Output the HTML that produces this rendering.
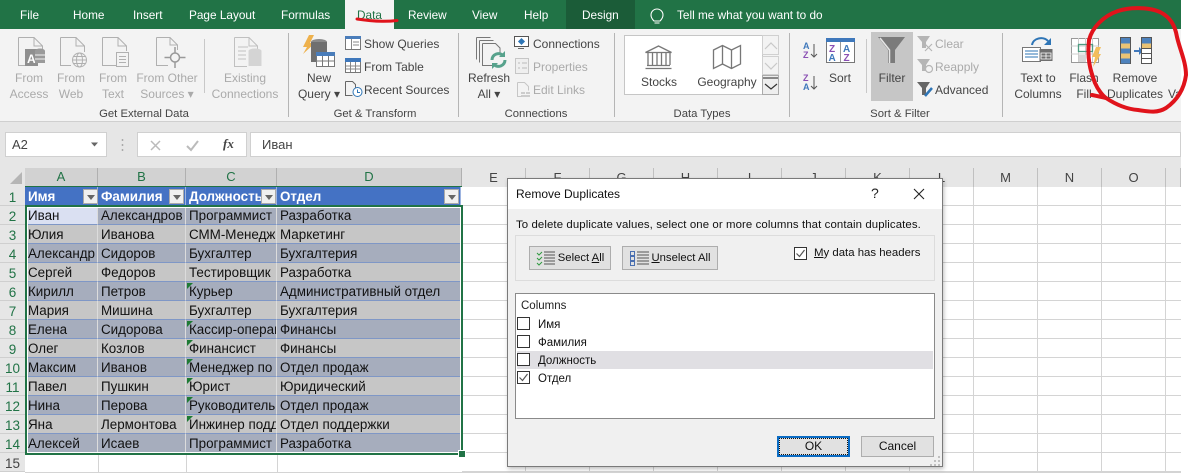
<!DOCTYPE html>
<html><head><meta charset="utf-8">
<style>
html,body{margin:0;padding:0;background:#fff}
body{width:1189px;height:473px;position:relative;overflow:hidden;font-family:"Liberation Sans",sans-serif;font-size:12px;color:#444}
.a,.t,.c{position:absolute;white-space:nowrap}
.t{line-height:16px;height:16px}
.c{line-height:16px;height:16px;text-align:center}
.g{font-size:11.300px}
.d{color:#aaa}
.tab{position:absolute;top:7px;color:#fff;font-size:11.800px;line-height:16px;white-space:nowrap}
.hd{position:absolute;top:168px;height:18px;line-height:18px;text-align:center;color:#217346;background:#d2d2d2;font-size:13px;border-right:1px solid #b0b0b0;box-sizing:border-box}
.hn{position:absolute;top:168px;height:19px;line-height:19px;text-align:center;color:#444;background:#e6e6e6;font-size:13px;border-right:1px solid #c0c0c0;box-sizing:border-box}
.rn{position:absolute;left:0;width:25px;height:19px;line-height:21px;text-align:center;background:#e6e6e6;color:#217346;font-size:13.500px;box-sizing:border-box;border-bottom:1px solid #cfcfcf}
table{position:absolute;left:25px;top:187px;border-collapse:separate;border-spacing:0;table-layout:fixed;width:436px;font-size:13.400px;color:#111}
td{height:19px;padding:2px 0 0 3px;box-sizing:border-box;overflow:hidden;white-space:nowrap;line-height:16px;border-bottom:1px solid #7f97c6;border-right:1px solid #dcdcdc}
tr.h td{background:#4472c4;color:#fff;font-weight:bold;border-right:1px solid #9db4e0;border-bottom:1px solid #4472c4}
tr.o td{background:#a6adbd}
tr.e td{background:#c6c6c6}
.f{position:absolute;top:189px;width:15px;height:15px;background:#f0f0f0;border:1px solid #aaa;box-sizing:border-box}
.f:after{content:"";position:absolute;left:3px;top:5px;border:4px solid transparent;border-top:5px solid #666;border-bottom:0}
.tri{position:absolute;left:187px;width:0;height:0;border-top:6px solid #1e7b34;border-right:6px solid transparent}
.cb{position:absolute;left:517px;width:13px;height:13px;border:1px solid #333;background:#fff;box-sizing:border-box}
.btn{position:absolute;background:#e1e1e1;border:1px solid #adadad;box-sizing:border-box;color:#111;text-align:center}
u{text-underline-offset:1px}
</style></head><body>

<div class="a" style="left:0;top:0;width:1181px;height:29px;background:#217346"></div>
<div class="a" style="left:345px;top:0;width:49px;height:29px;background:#f3f3f3"></div>
<div class="a" style="left:566px;top:0;width:69px;height:29px;background:#1b5c38"></div>
<span class="tab" style="left:20px">File</span>
<span class="tab" style="left:73px">Home</span>
<span class="tab" style="left:133px">Insert</span>
<span class="tab" style="left:189px">Page Layout</span>
<span class="tab" style="left:281px">Formulas</span>
<span class="tab" style="left:357px;color:#217346">Data</span>
<span class="tab" style="left:408px">Review</span>
<span class="tab" style="left:472px">View</span>
<span class="tab" style="left:524px">Help</span>
<span class="tab" style="left:582px">Design</span>
<span class="tab" style="left:677px">Tell me what you want to do</span>

<div class="a" style="left:0;top:29px;width:1181px;height:92px;background:#f3f3f3"></div>
<div class="a" style="left:0;top:121px;width:1181px;height:11px;background:#e6e6e6;border-top:1px solid #cfcfcf;box-sizing:border-box"></div>
<div class="a" style="left:0;top:132px;width:1181px;height:25px;background:#e6e6e6"></div>
<div class="a" style="left:0;top:157px;width:1181px;height:11px;background:#e6e6e6"></div>
<div class="a" style="left:5px;top:132px;width:102px;height:25px;background:#fff;border:1px solid #d0d0d0;box-sizing:border-box"></div>
<div class="a" style="left:137px;top:132px;width:110px;height:25px;background:#fff;border:1px solid #d0d0d0;box-sizing:border-box"></div>
<div class="a" style="left:250px;top:132px;width:931px;height:25px;background:#fff;border:1px solid #d0d0d0;box-sizing:border-box"></div>
<span class="t" style="left:12px;top:137px;font-size:13px">A2</span>
<span class="t" style="left:262px;top:137px;font-size:13px">Иван</span>
<span class="t" style="left:223px;top:136px;font-family:'Liberation Serif',serif;font-style:italic;font-weight:bold;font-size:13px">fx</span>

<!-- gallery -->
<div class="a" style="left:624px;top:35px;width:139px;height:60px;background:#fff;border:1px solid #c6c6c6;box-sizing:border-box"></div>
<div class="a" style="left:762px;top:35px;width:17px;height:20px;background:#f3f3f3;border:1px solid #d0d0d0;box-sizing:border-box"></div>
<div class="a" style="left:762px;top:56px;width:17px;height:19px;background:#f3f3f3;border:1px solid #d0d0d0;box-sizing:border-box"></div>
<div class="a" style="left:762px;top:75px;width:17px;height:20px;background:#eee;border:1px solid #aaa;box-sizing:border-box"></div>

<!-- ribbon labels -->
<span class="c d" style="left:9px;top:70px;width:40px">From</span><span class="c d" style="left:9px;top:86px;width:40px">Access</span>
<span class="c d" style="left:51px;top:70px;width:40px">From</span><span class="c d" style="left:51px;top:86px;width:40px">Web</span>
<span class="c d" style="left:93px;top:70px;width:40px">From</span><span class="c d" style="left:93px;top:86px;width:40px">Text</span>
<span class="c d" style="left:135px;top:70px;width:64px">From Other</span><span class="c d" style="left:135px;top:86px;width:64px">Sources ▾</span>
<span class="c d" style="left:210px;top:70px;width:70px">Existing</span><span class="c d" style="left:210px;top:86px;width:70px">Connections</span>
<span class="c g" style="left:79px;top:106px;width:130px">Get External Data</span>
<span class="c" style="left:299px;top:70px;width:40px">New</span><span class="c" style="left:295px;top:86px;width:48px">Query ▾</span>
<span class="c g" style="left:320px;top:106px;width:110px">Get &amp; Transform</span>
<span class="t" style="left:364px;top:36px">Show Queries</span>
<span class="t" style="left:364px;top:59px">From Table</span>
<span class="t" style="left:364px;top:82px">Recent Sources</span>
<span class="c" style="left:466px;top:70px;width:46px">Refresh</span><span class="c" style="left:466px;top:86px;width:46px">All ▾</span>
<span class="t" style="left:533px;top:36px">Connections</span>
<span class="t d" style="left:533px;top:59px">Properties</span>
<span class="t d" style="left:533px;top:82px">Edit Links</span>
<span class="c g" style="left:486px;top:106px;width:100px">Connections</span>
<span class="c" style="left:632px;top:74px;width:54px">Stocks</span>
<span class="c" style="left:694px;top:74px;width:66px">Geography</span>
<span class="c g" style="left:667px;top:106px;width:70px">Data Types</span>
<span class="c" style="left:820px;top:70px;width:40px">Sort</span>
<div class="a" style="left:871px;top:32px;width:42px;height:69px;background:#c6c6c6"></div>
<span class="c" style="left:871px;top:70px;width:42px">Filter</span>
<span class="t d" style="left:935px;top:36px">Clear</span>
<span class="t d" style="left:935px;top:59px">Reapply</span>
<span class="t" style="left:935px;top:82px">Advanced</span>
<span class="c g" style="left:850px;top:106px;width:100px">Sort &amp; Filter</span>
<span class="c" style="left:1012px;top:70px;width:52px">Text to</span><span class="c" style="left:1012px;top:86px;width:52px">Columns</span>
<span class="c" style="left:1066px;top:70px;width:36px">Flash</span><span class="c" style="left:1066px;top:86px;width:36px">Fill</span>
<span class="c" style="left:1105px;top:70px;width:60px">Remove</span><span class="c" style="left:1105px;top:86px;width:60px">Duplicates</span>
<span class="t" style="left:1168px;top:86px;width:12px;overflow:hidden">Va</span>

<!-- grid -->
<div class="a" style="left:462px;top:187px;width:719px;height:286px;background-color:#fff;background-image:linear-gradient(#d4d4d4 1px,transparent 1px),linear-gradient(90deg,#d4d4d4 1px,transparent 1px);background-size:64px 19px;background-position:63px 18px"></div>
<div class="a" style="left:25px;top:453px;width:437px;height:20px;background-image:linear-gradient(#d4d4d4 1px,transparent 1px);background-size:64px 19px;background-position:0 19px"></div>
<div class="a" style="left:98px;top:454px;width:1px;height:18px;background:#d4d4d4"></div>
<div class="a" style="left:186px;top:454px;width:1px;height:18px;background:#d4d4d4"></div>
<div class="a" style="left:277px;top:454px;width:1px;height:18px;background:#d4d4d4"></div>
<div class="a" style="left:25px;top:472px;width:1156px;height:1px;background:#d4d4d4"></div>

<!-- headers -->
<div class="a" style="left:0;top:168px;width:25px;height:19px;background:#e6e6e6"></div>
<div class="hd" style="left:25px;width:73px">A</div>
<div class="hd" style="left:98px;width:88px">B</div>
<div class="hd" style="left:186px;width:91px">C</div>
<div class="hd" style="left:277px;width:185px">D</div>
<div class="hn" style="left:462px;width:64px">E</div>
<div class="hn" style="left:526px;width:64px">F</div>
<div class="hn" style="left:590px;width:64px">G</div>
<div class="hn" style="left:654px;width:64px">H</div>
<div class="hn" style="left:718px;width:64px">I</div>
<div class="hn" style="left:782px;width:64px">J</div>
<div class="hn" style="left:846px;width:64px">K</div>
<div class="hn" style="left:910px;width:64px">L</div>
<div class="hn" style="left:974px;width:64px">M</div>
<div class="hn" style="left:1038px;width:64px">N</div>
<div class="hn" style="left:1102px;width:64px">O</div>
<div class="hn" style="left:1166px;width:15px"></div>

<div class="rn" style="top:187px">1</div><div class="rn" style="top:206px">2</div><div class="rn" style="top:225px">3</div><div class="rn" style="top:244px">4</div><div class="rn" style="top:263px">5</div><div class="rn" style="top:282px">6</div><div class="rn" style="top:301px">7</div><div class="rn" style="top:320px">8</div><div class="rn" style="top:339px">9</div><div class="rn" style="top:358px">10</div><div class="rn" style="top:377px">11</div><div class="rn" style="top:396px">12</div><div class="rn" style="top:415px">13</div><div class="rn" style="top:434px">14</div><div class="rn" style="top:453px;color:#444">15</div>

<table>
<colgroup><col style="width:73px"><col style="width:88px"><col style="width:91px"><col style="width:184px"></colgroup>
<tr class="h"><td>Имя</td><td>Фамилия</td><td style="padding-right:15px">Должность</td><td>Отдел</td></tr>
<tr class="o"><td style="background:#dae0f2">Иван</td><td>Александров</td><td>Программист</td><td>Разработка</td></tr>
<tr class="e"><td>Юлия</td><td>Иванова</td><td>СММ-Менеджер</td><td>Маркетинг</td></tr>
<tr class="o"><td>Александр</td><td>Сидоров</td><td>Бухгалтер</td><td>Бухгалтерия</td></tr>
<tr class="e"><td>Сергей</td><td>Федоров</td><td>Тестировщик</td><td>Разработка</td></tr>
<tr class="o"><td>Кирилл</td><td>Петров</td><td>Курьер</td><td>Административный отдел</td></tr>
<tr class="e"><td>Мария</td><td>Мишина</td><td>Бухгалтер</td><td>Бухгалтерия</td></tr>
<tr class="o"><td>Елена</td><td>Сидорова</td><td>Кассир-операционист</td><td>Финансы</td></tr>
<tr class="e"><td>Олег</td><td>Козлов</td><td>Финансист</td><td>Финансы</td></tr>
<tr class="o"><td>Максим</td><td>Иванов</td><td>Менеджер по продажам</td><td>Отдел продаж</td></tr>
<tr class="e"><td>Павел</td><td>Пушкин</td><td>Юрист</td><td>Юридический</td></tr>
<tr class="o"><td>Нина</td><td>Перова</td><td>Руководитель отдела</td><td>Отдел продаж</td></tr>
<tr class="e"><td>Яна</td><td>Лермонтова</td><td>Инжинер поддержки</td><td>Отдел поддержки</td></tr>
<tr class="o"><td>Алексей</td><td>Исаев</td><td>Программист</td><td>Разработка</td></tr>
</table>
<div class="a" style="left:25px;top:186px;width:437px;height:1px;background:#217346"></div>
<div class="f" style="left:83px"></div><div class="f" style="left:169px"></div><div class="f" style="left:261px"></div><div class="f" style="left:444px"></div>
<div class="tri" style="top:283px"></div><div class="tri" style="top:321px"></div><div class="tri" style="top:340px"></div><div class="tri" style="top:359px"></div><div class="tri" style="top:378px"></div><div class="tri" style="top:397px"></div><div class="tri" style="top:416px"></div>
<div class="a" style="left:25px;top:205px;width:438px;height:250px;border:2px solid #217346;box-sizing:border-box;box-shadow:inset 0 0 0 1px #fff"></div>
<div class="a" style="left:458px;top:450px;width:6px;height:6px;background:#217346;border:1px solid #fff"></div>

<!-- ribbon icons -->
<svg class="a" style="left:0;top:0" width="1189" height="160" viewBox="0 0 1189 160" fill="none">
<g stroke="#c8c8c8"><path d="M204.500 39V93M866.500 39V93"/></g>
<g stroke="#b5b5b5"><path d="M288.500 33V117M458.500 33V117M614.500 33V117M789.500 33V117M1002.500 33V117"/></g>
<!-- From Access -->
<g stroke="#b0b0b0"><path d="M18.500 37.500H34L42.500 46V50M18.500 37.500V65.500H27M34 37.500V46H42.500"/></g>
<rect x="25" y="49" width="13" height="17" fill="#8f8f8f"/><text x="27" y="63" font-size="12" font-weight="bold" fill="#fff" font-family="Liberation Sans">A</text>
<ellipse cx="40" cy="51" rx="5" ry="2.500" fill="#9a9a9a"/><rect x="35" y="51" width="10" height="12" fill="#9a9a9a"/>
<path d="M35 55h10M35 59h10" stroke="#f3f3f3"/>
<!-- From Web -->
<g stroke="#b0b0b0"><path d="M60.500 37.500H76L84.500 46V52M60.500 37.500V65.500H71M76 37.500V46H84.500"/>
<circle cx="79.500" cy="60" r="7" fill="#f3f3f3"/><ellipse cx="79.500" cy="60" rx="3" ry="7"/><path d="M72.500 60h14M73.500 56.500h12M73.500 63.500h12"/></g>
<!-- From Text -->
<g stroke="#b0b0b0"><path d="M102.500 37.500H118L126.500 46V51M102.500 37.500V65.500H116M118 37.500V46H126.500"/>
<rect x="116.500" y="52.500" width="12" height="14" fill="#f3f3f3"/><path d="M119 56.500h7M119 59.500h7M119 62.500h7"/></g>
<!-- From Other -->
<g stroke="#b0b0b0"><path d="M156.500 37.500H170L177.500 45V50M156.500 37.500V65.500H168M170 37.500V45H177.500"/></g>
<g stroke="#999" stroke-width="1.500"><circle cx="175" cy="57.500" r="4.500" fill="#f3f3f3"/><path d="M175 47v6M175 62v6M164.500 57.500h6M179.500 57.500h6"/></g>
<!-- Existing -->
<g stroke="#c0c0c0"><path d="M234.500 37.500H249L257.500 46V50M234.500 37.500V66.500H247M249 37.500V46H257.500M238 47h10M238 51h8M238 55h8M238 59h8"/></g>
<ellipse cx="255" cy="51" rx="6.500" ry="2.500" fill="#d4d4d4"/><rect x="248.500" y="51" width="13" height="15" fill="#d4d4d4"/>
<!-- New Query -->
<path d="M309 35L303 47H307L303 54L315 43H310L314 35Z" fill="#eeb14c"/>
<ellipse cx="319" cy="42" rx="8" ry="3" fill="#8a8a8a"/><rect x="311" y="42" width="16" height="20" fill="#6f6f6f"/>
<rect x="316.500" y="52.500" width="18" height="14" fill="#fff" stroke="#777"/><rect x="316" y="52" width="19" height="4" fill="#4a7dba"/><path d="M322.500 56v10M328.500 56v10M317 61h17" stroke="#777"/>
<!-- Show Queries -->
<rect x="345.500" y="36.500" width="15" height="13" fill="#fff" stroke="#777"/><rect x="345" y="36" width="16" height="3" fill="#4a7dba"/><path d="M351.500 39v10M353 42h6M353 45h6" stroke="#888"/>
<!-- From Table -->
<rect x="345.500" y="58.500" width="15" height="14" fill="#fff" stroke="#777"/><rect x="345" y="58" width="16" height="4" fill="#3f78bb"/><path d="M350.500 62v10M355.500 62v10M346 66h14M346 69h14" stroke="#888"/>
<!-- Recent -->
<path d="M345.500 81.500h7l3 3v4M345.500 81.500v14h7" stroke="#666"/><circle cx="357.500" cy="92" r="4.500" fill="#fff" stroke="#2e75b6"/><path d="M357.500 89.500v3h2.500" stroke="#2e75b6"/>
<!-- Refresh -->
<g stroke="#777"><path d="M476.500 37.500h14M476.500 37.500v22M479.500 40.500h14M479.500 40.500v22"/><path d="M482.500 43.500h13l4.500 4.500v6M482.500 43.500v22h10" fill="#f3f3f3"/></g>
<path d="M492 60a6.500 6.500 0 0 1 11-4.500" stroke="#57a28c" stroke-width="3"/><path d="M505 60a6.500 6.500 0 0 1-11 4.500" stroke="#57a28c" stroke-width="3"/><path d="M505 51v6h-6z" fill="#57a28c"/><path d="M492 69v-6h6z" fill="#57a28c"/>
<!-- Connections -->
<rect x="514.500" y="36.500" width="14" height="10" fill="#fff" stroke="#555"/><path d="M518 48.500h6" stroke="#666"/><rect x="519" y="39" width="5" height="5" fill="#2e75b6" transform="rotate(45 521.500 41.500)"/>
<!-- Properties -->
<rect x="515.500" y="58.500" width="13" height="15" fill="#efefef" stroke="#c6c6c6"/><path d="M518 63h2M522 63h5M518 68h2M522 68h5" stroke="#bbb"/>
<!-- Edit Links -->
<path d="M517.500 82.500h7l4 4v4M517.500 82.500v14h4" stroke="#c6c6c6"/><path d="M521 93h4M526 93h4M521 96h9" stroke="#c0c0c0" stroke-width="1.500"/>
<!-- Stocks -->
<g stroke="#777" stroke-width="1.300"><path d="M645.500 52.500L658.500 46L671.500 52.500Z"/><path d="M648 53v12M652.500 53v12M657 53v12M661.500 53v12M666 53v12M670 53v12M645.500 68.500h26M647 65.500h23"/></g>
<!-- Geography -->
<g stroke="#777" stroke-width="1.300"><path d="M713.500 50L722.500 45.500L731.500 50L740.500 45.500V64L731.500 68.500L722.500 64L713.500 68.500Z"/><path d="M722.500 45.500V64M731.500 50V68.500"/></g>
<!-- gallery arrows -->
<path d="M765 49l6-6 6 6M765 63l6 6 6-6" stroke="#c8c8c8" stroke-width="1.200"/>
<path d="M763 78h15" stroke="#222"/><path d="M765 84l6 5 6-5" stroke="#333" stroke-width="1.200"/>
<!-- Sort AZ -->
<text x="803" y="49" font-size="9" font-weight="bold" fill="#3f78bb" font-family="Liberation Sans">A</text><text x="803" y="58" font-size="9" font-weight="bold" fill="#8a4fb3" font-family="Liberation Sans">Z</text>
<path d="M814 44v13M811 54l3 3 3-3" stroke="#555"/>
<text x="803" y="81" font-size="9" font-weight="bold" fill="#8a4fb3" font-family="Liberation Sans">Z</text><text x="803" y="90" font-size="9" font-weight="bold" fill="#3f78bb" font-family="Liberation Sans">A</text>
<path d="M814 76v13M811 86l3 3 3-3" stroke="#555"/>
<!-- Sort big -->
<rect x="826.500" y="38.500" width="28" height="24" fill="#fff" stroke="#777"/><rect x="826" y="38" width="29" height="4" fill="#3f78bb"/><path d="M840.500 42v20" stroke="#999"/>
<text x="829" y="52" font-size="10" font-weight="bold" fill="#8a4fb3" font-family="Liberation Sans">Z</text><text x="828.500" y="61" font-size="10" font-weight="bold" fill="#3f78bb" font-family="Liberation Sans">A</text>
<text x="843" y="52" font-size="10" font-weight="bold" fill="#3f78bb" font-family="Liberation Sans">A</text><text x="843.500" y="61" font-size="10" font-weight="bold" fill="#8a4fb3" font-family="Liberation Sans">Z</text>
<!-- Filter -->
<path d="M878 37H905L895 50V63H888V50Z" fill="#7b7b7b"/><path d="M880 38L889.500 50V63" stroke="#e5e5e5" stroke-width="1.500"/>
<!-- Clear -->
<path d="M917 36H930L926 42V48H922V42Z" fill="#b5b5b5"/><path d="M925 44l7 7m0-7l-7 7" stroke="#b5b5b5" stroke-width="1.200"/>
<!-- Reapply -->
<path d="M917 59H930L926 65V71H922V65Z" fill="#b5b5b5"/><circle cx="929" cy="69" r="3.500" stroke="#b5b5b5" stroke-width="1.200"/>
<!-- Advanced -->
<path d="M917 82H930L926 88V95H922V88Z" fill="#666"/><path d="M925 96l7-8" stroke="#2e75b6" stroke-width="2.500"/>
<!-- Text to Columns -->
<path d="M1032 45c1-7 11-9 16-4" stroke="#2e75b6" stroke-width="2"/><path d="M1051 38v7h-7z" fill="#2e75b6"/>
<path d="M1022.500 47.500h18v14h-18z" fill="#fff" stroke="#777"/><path d="M1025 51h13M1025 54h13M1025 57h13" stroke="#2e75b6"/>
<rect x="1039.500" y="49" width="13" height="12" fill="#6e6e6e"/><path d="M1041 53h10v6h-10zM1046 53v6M1041 56h10" stroke="#fff" fill="none" stroke-width=".8"/>
<!-- Flash Fill -->
<rect x="1071.500" y="38.500" width="27" height="24" fill="#fff" stroke="#999"/><path d="M1071 46h28M1071 54h28M1078.500 38v24M1085.500 38v24M1092.500 38v24" stroke="#ccc"/>
<rect x="1078.500" y="44.500" width="14" height="7" stroke="#4e9c82" stroke-width="1.300"/><rect x="1079" y="55" width="7" height="7" fill="#d6d6d6"/>
<path d="M1096 47H1101L1098 54H1101L1093 67L1095 57H1092Z" fill="#f2be5c"/>
<!-- Remove Dup -->
<rect x="1120.500" y="37.500" width="10" height="26" fill="#fff" stroke="#555"/><rect x="1121" y="38" width="9" height="5.500" fill="#4d82bd"/><rect x="1121" y="43.500" width="9" height="5" fill="#eac375"/><rect x="1121" y="48.500" width="9" height="5" fill="#4d82bd"/><rect x="1121" y="53.500" width="9" height="5" fill="#eac375"/><rect x="1121" y="58.500" width="9" height="5" fill="#4d82bd"/>
<path d="M1134 51h6" stroke="#3f78bb" stroke-width="2"/><path d="M1139 47l4 4-4 4z" fill="#3f78bb"/>
<rect x="1141.500" y="37.500" width="10" height="26" fill="#fff" stroke="#555"/><rect x="1142" y="38" width="9" height="5.500" fill="#4d82bd"/><rect x="1142" y="43.500" width="9" height="5" fill="#eac375"/><path d="M1142 48.500h9M1142 53.500h9M1142 58.500h9" stroke="#555"/>
<!-- name box arrow, formula icons -->
<path d="M91 142.500h7l-3.500 4z" fill="#666"/>
<path d="M122.500 139v2M122.500 144v2M122.500 149v2" stroke="#aaa" stroke-width="1.500"/>
<path d="M151 141l9 9m0-9l-9 9" stroke="#bbb" stroke-width="1.500"/>
<path d="M187 146l4 4 7-9" stroke="#bbb" stroke-width="2"/>
<!-- lightbulb -->
<path d="M654 21c-2-2-3-3.500-3-6a6 6 0 0 1 12 0c0 2.500-1 4-3 6zM654.500 23h5" stroke="#fff" stroke-width="1.100"/>
</svg>

<!-- sheet corner -->
<svg class="a" style="left:0;top:168px" width="25" height="19"><path d="M22 4V16H10Z" fill="#b5b5b5"/></svg>

<!-- dialog -->
<div class="a" style="left:507px;top:178px;width:436px;height:289px;background:#f0f0f0;border:1px solid #7a7a7a;box-sizing:border-box;box-shadow:1px 2px 4px rgba(0,0,0,.25)"></div>
<div class="a" style="left:508px;top:179px;width:434px;height:30px;background:#fff"></div>
<span class="t" style="left:516px;top:186px;color:#111;font-size:12px">Remove Duplicates</span>
<span class="t" style="left:871px;top:185px;color:#222;font-size:14px">?</span>
<svg class="a" style="left:912px;top:187px" width="14" height="14"><path d="M2 2l10 10m0-10L2 12" stroke="#222" stroke-width="1.100" fill="none"/></svg>
<span class="t" style="left:516px;top:217px;color:#111;font-size:11.400px;letter-spacing:.1px">To delete duplicate values, select one or more columns that contain duplicates.</span>
<div class="a" style="left:515px;top:235px;width:420px;height:46px;border:1px solid #dcdcdc;box-sizing:border-box"></div>
<div class="btn" style="left:529px;top:246px;width:82px;height:24px;line-height:22px;padding-left:22px;font-size:11.300px">Select <u>A</u>ll</div>
<div class="btn" style="left:622px;top:246px;width:96px;height:24px;line-height:22px;padding-left:22px;font-size:11.300px"><u>U</u>nselect All</div>
<svg class="a" style="left:535px;top:250px" width="180" height="16" fill="none">
<path d="M2 3l2 2 3-3M2 8l2 2 3-3M2 13l2 2 3-3" stroke="#2f9a3f"/><path d="M9 2h11M9 5h11M9 8h11M9 11h11M9 14h11" stroke="#555"/>
<path d="M95.500 1.500h4v4h-4zM95.500 6.500h4v4h-4zM95.500 11.500h4v4h-4z" stroke="#4a6fb0"/><path d="M102 2h12M102 5h12M102 8h12M102 11h12M102 14h12" stroke="#555"/>
</svg>
<div class="a" style="left:794px;top:247px;width:13px;height:13px;border:1px solid #333;box-sizing:border-box;background:#fff"></div>
<svg class="a" style="left:794px;top:247px" width="13" height="13"><path d="M2.500 6.500l3 3 5-6.500" stroke="#555" stroke-width="1.200" fill="none"/></svg>
<span class="t" style="left:814px;top:245px;color:#111;font-size:11.400px"><u>M</u>y data has headers</span>
<div class="a" style="left:515px;top:293px;width:420px;height:126px;background:#fff;border:1px solid #8a8a8a;box-sizing:border-box"></div>
<span class="t" style="left:521px;top:298px;color:#222;font-size:11.500px">Columns</span>
<div class="a" style="left:517px;top:351px;width:416px;height:18px;background:#e0dfe3"></div>
<div class="cb" style="top:317px"></div><span class="t" style="left:538px;top:317px;color:#111;font-size:11.500px">Имя</span>
<div class="cb" style="top:335px"></div><span class="t" style="left:538px;top:335px;color:#111;font-size:11.500px">Фамилия</span>
<div class="cb" style="top:353px"></div><span class="t" style="left:538px;top:353px;color:#111;font-size:11.500px">Должность</span>
<div class="cb" style="top:371px"></div><span class="t" style="left:538px;top:371px;color:#111;font-size:11.500px">Отдел</span>
<svg class="a" style="left:517px;top:371px" width="13" height="13"><path d="M2.500 6.500l3 3 5-6.500" stroke="#555" stroke-width="1.200" fill="none"/></svg>
<div class="btn" style="left:777px;top:436px;width:73px;height:21px;line-height:17px;border:2px solid #0a6cc4;font-size:12px;outline:1px dotted #111;outline-offset:-3px">OK</div>
<div class="btn" style="left:861px;top:436px;width:73px;height:21px;line-height:19px;font-size:12px">Cancel</div>
<svg class="a" style="left:930px;top:455px" width="12" height="11"><path d="M8 1h2v2H8zM4 5h2v2H4zM8 5h2v2H8zM0 9h2v2H0zM4 9h2v2H4zM8 9h2v2H8z" fill="#c0c0c0"/></svg>

<!-- red marks -->
<svg class="a" style="left:0;top:0" width="1189" height="130" fill="none">
<path d="M357 19C370 21 385 22 397 20.500" stroke="#e0131b" stroke-width="3" stroke-linecap="round"/>
<path d="M1092 95C1097 96 1102 97 1106 98C1103 96 1098 90 1095 83C1090 70 1087 58 1089 40C1092 28 1103 16 1118 11C1130 7 1148 7 1160 12C1170 17 1175 25 1177 37C1180 50 1186 62 1186 75C1184 90 1176 101 1166 108C1158 113 1150 112 1138 110C1125 109 1115 104 1106 98" stroke="#e0131b" stroke-width="4" stroke-linecap="round" stroke-linejoin="round"/>
</svg>
</body></html>
